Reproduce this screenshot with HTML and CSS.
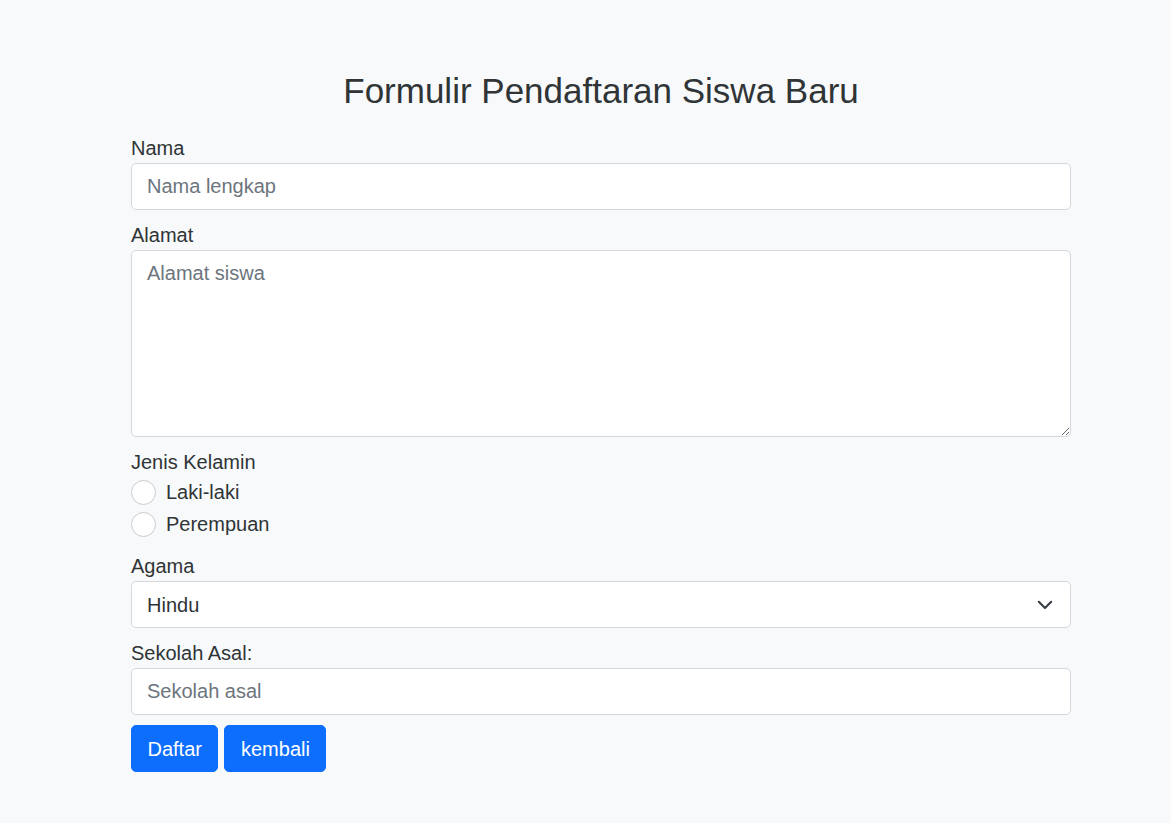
FILE: index.html
```html
<!DOCTYPE html>
<html lang="id">
<head>
<meta charset="utf-8">
<title>Formulir Pendaftaran Siswa Baru</title>
<link rel="stylesheet" href="styles.css">
</head>
<body>
<main class="container">
  <h3 class="title">Formulir Pendaftaran Siswa Baru</h3>
  <form class="form">
    <div class="field">
      <label class="label" for="nama">Nama</label>
      <input class="control" id="nama" type="text" placeholder="Nama lengkap">
    </div>
    <div class="field">
      <label class="label" for="alamat">Alamat</label>
      <textarea class="control area" id="alamat" placeholder="Alamat siswa"></textarea>
    </div>
    <div class="field">
      <div class="label">Jenis Kelamin</div>
      <label class="check"><input class="radio" type="radio" name="jk"><span>Laki-laki</span></label>
      <label class="check"><input class="radio" type="radio" name="jk"><span>Perempuan</span></label>
    </div>
    <div class="field">
      <label class="label" for="agama">Agama</label>
      <div class="select-wrap">
        <select class="control select" id="agama">
          <option>Hindu</option>
        </select>
        <svg class="chev" width="16" height="10" viewBox="0 0 16 10" aria-hidden="true"><path d="M1.8 1.8l6.2 6.2 6.2-6.2" fill="none" stroke="#343a40" stroke-width="2" stroke-linecap="round" stroke-linejoin="round"/></svg>
      </div>
    </div>
    <div class="field">
      <label class="label" for="sekolah">Sekolah Asal:</label>
      <input class="control" id="sekolah" type="text" placeholder="Sekolah asal">
    </div>
    <div class="actions">
      <button class="btn" type="button">Daftar</button>
      <button class="btn" type="button">kembali</button>
    </div>
  </form>
</main>
</body>
</html>
```
FILE: styles.css
```css
* { box-sizing: border-box; }
html, body { margin: 0; padding: 0; }
body {
  background: #f8f9fa;
  color: #2f3437;
  font-family: "Liberation Sans", Arial, sans-serif;
  font-size: 20px;
  line-height: 30px;
}
.container {
  width: 940px;
  margin: 0 0 0 131px;
  padding-top: 70px;
}
.title {
  margin: 0 0 21px;
  font-size: 35px;
  line-height: 42px;
  font-weight: 400;
  text-align: center;
  color: #2f3437;
}
.form { display: flex; flex-direction: column; gap: 10px; }
.field { display: flex; flex-direction: column; }
.label { display: block; line-height: 30px; }
.control {
  display: block;
  width: 100%;
  height: 47px;
  padding: 7px 15px;
  font: inherit;
  font-size: 20px;
  line-height: 30px;
  color: #2f3437;
  background: #fff;
  border: 1px solid #d4d8dc;
  border-radius: 5px;
  outline: none;
}
.control::placeholder { color: #6c757d; opacity: 1; }
.area { height: 187px; resize: vertical; }
.select-wrap { position: relative; }
.select { appearance: none; -webkit-appearance: none; padding-right: 50px; }
.chev { position: absolute; right: 18px; top: 19px; pointer-events: none; }
.check {
  display: flex;
  align-items: center;
  gap: 10px;
  height: 30px;
  margin-bottom: 2px;
}
.radio {
  appearance: none;
  -webkit-appearance: none;
  width: 25px;
  height: 25px;
  margin: 0;
  border: 1px solid #c8ccd0;
  border-radius: 50%;
  background: #fff;
  flex: none;
}
.actions { display: flex; gap: 6px; }
.btn {
  height: 47px;
  padding: 7px 15.5px;
  font: inherit;
  font-size: 20px;
  line-height: 30px;
  color: #fff;
  background: #0d6efd;
  border: 1px solid #0d6efd;
  border-radius: 5px;
}
```
